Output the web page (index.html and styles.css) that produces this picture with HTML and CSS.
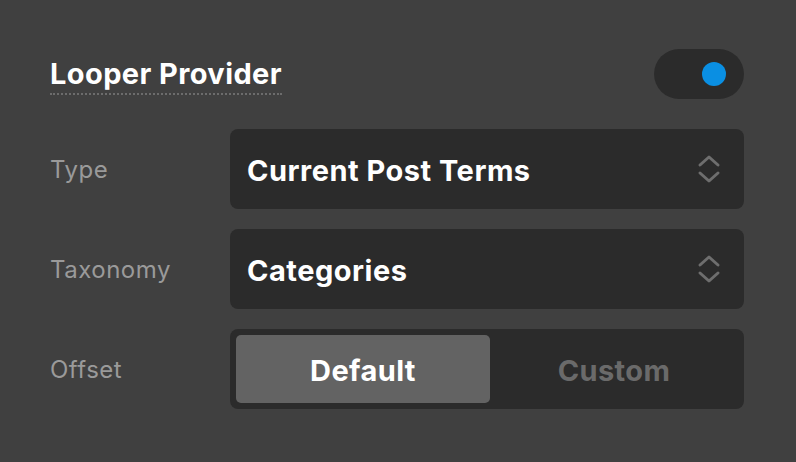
FILE: index.html
```html
<!DOCTYPE html>
<html lang="en">
<head>
    <meta charset="UTF-8">
    <title>Looper Provider</title>
    <link rel="stylesheet" href="styles.css">
</head>
<body>
    <div class="panel">
        <div class="header">
            <span class="title">Looper Provider</span>
            <div class="toggle"><span class="knob"></span></div>
        </div>

        <div class="row">
            <div class="label">Type</div>
            <div class="select">
                <span>Current Post Terms</span>
                <svg class="chevrons" width="24" height="30" viewBox="0 0 24 30">
                    <path d="M3 11 L12 3 L21 11 M3 19 L12 27 L21 19" fill="none" stroke="#6e6e6e" stroke-width="3" stroke-linecap="round" stroke-linejoin="round"/>
                </svg>
            </div>
        </div>

        <div class="row">
            <div class="label">Taxonomy</div>
            <div class="select">
                <span>Categories</span>
                <svg class="chevrons" width="24" height="30" viewBox="0 0 24 30">
                    <path d="M3 11 L12 3 L21 11 M3 19 L12 27 L21 19" fill="none" stroke="#6e6e6e" stroke-width="3" stroke-linecap="round" stroke-linejoin="round"/>
                </svg>
            </div>
        </div>

        <div class="row">
            <div class="label">Offset</div>
            <div class="segmented">
                <button class="active">Default</button>
                <button>Custom</button>
            </div>
        </div>
    </div>
</body>
</html>
```

FILE: styles.css
```css
body {
    margin: 0;
    background-color: #404040;
    font-family: Inter, "Noto Sans", sans-serif;
}

.panel {
    padding: 49px 52px 0 50px;
}

.header {
    display: flex;
    align-items: center;
    justify-content: space-between;
    height: 50px;
    margin-bottom: 30px;
}

.title {
    color: #ffffff;
    font-size: 29px;
    font-weight: 700;
    letter-spacing: 0.4px;
    line-height: 34px;
    padding-bottom: 2px;
    border-bottom: 2px dotted #6c6c6c;
    margin-top: 4px;
}

.toggle {
    width: 90px;
    height: 50px;
    border-radius: 25px;
    background-color: #2b2b2b;
    display: flex;
    align-items: center;
    justify-content: flex-end;
    padding-right: 18px;
    box-sizing: border-box;
}

.knob {
    width: 24px;
    height: 24px;
    border-radius: 50%;
    background-color: #0a8fe3;
}

.row {
    display: flex;
    align-items: center;
    height: 80px;
    margin-bottom: 20px;
}

.label {
    width: 180px;
    color: #9a9a9a;
    font-size: 24px;
    letter-spacing: 0.5px;
    flex-shrink: 0;
}

.select {
    flex: 1;
    height: 80px;
    border-radius: 8px;
    background-color: #2b2b2b;
    display: flex;
    align-items: center;
    justify-content: space-between;
    padding: 3px 23px 0 17px;
    box-sizing: border-box;
    color: #ffffff;
    font-size: 29px;
    font-weight: 700;
    letter-spacing: 0.5px;
}

.select .chevrons {
    margin-top: -3px;
}

.segmented {
    flex: 1;
    height: 80px;
    border-radius: 8px;
    background-color: #2b2b2b;
    display: flex;
    padding: 6px;
    box-sizing: border-box;
}

.segmented button {
    flex: 1;
    border: none;
    border-radius: 5px;
    background: transparent;
    color: #6a6a6a;
    font-family: Inter, "Noto Sans", sans-serif;
    font-size: 29px;
    font-weight: 700;
    letter-spacing: 0.4px;
    padding: 2px 0 0;
}

.segmented button.active {
    flex: 0 0 254px;
    background-color: #636363;
    color: #ffffff;
}
```
